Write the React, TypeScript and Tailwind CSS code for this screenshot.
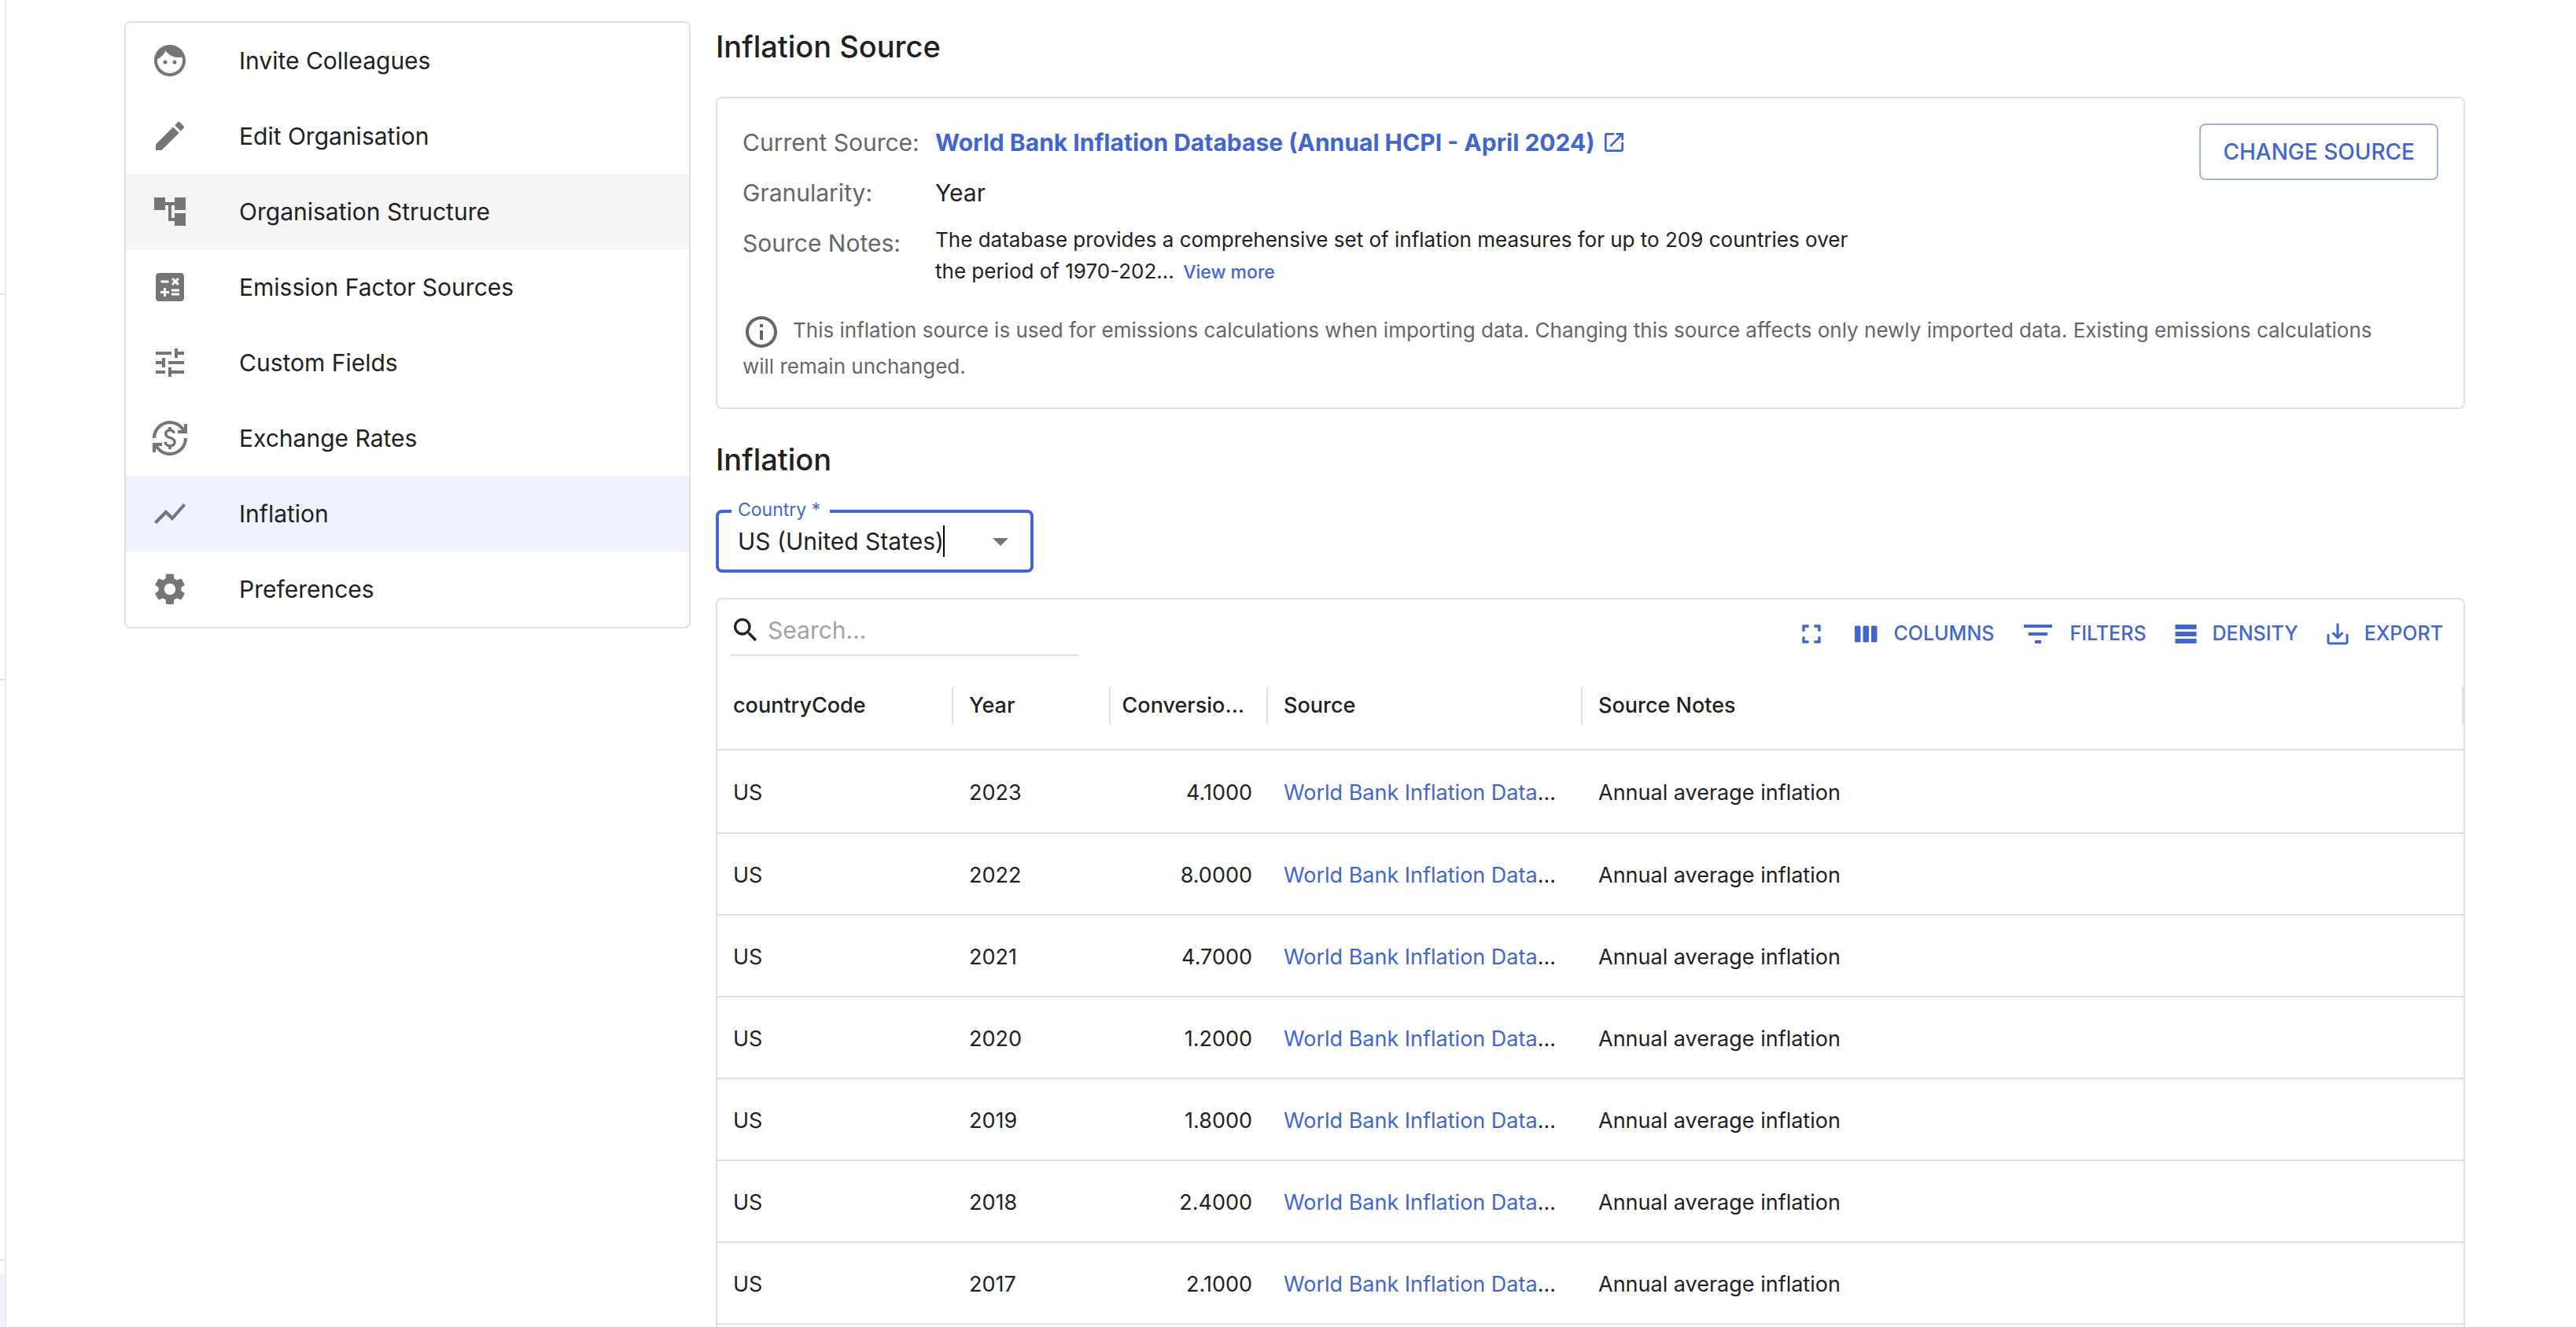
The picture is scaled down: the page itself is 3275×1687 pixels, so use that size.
import React, { useState } from 'react';
import {
  MdFace,
  MdEdit,
  MdAccountTree,
  MdCalculate,
  MdTune,
  MdCurrencyExchange,
  MdShowChart,
  MdSettings,
  MdOpenInNew,
  MdInfoOutline,
  MdArrowDropDown,
  MdSearch,
  MdFullscreen,
  MdFilterList,
  MdTableRows,
  MdSaveAlt,
} from 'react-icons/md';

const menuItems = [
  { id: 'invite', label: 'Invite Colleagues', icon: <MdFace /> },
  { id: 'edit', label: 'Edit Organisation', icon: <MdEdit /> },
  { id: 'structure', label: 'Organisation Structure', icon: <MdAccountTree /> },
  { id: 'factors', label: 'Emission Factor Sources', icon: <MdCalculate /> },
  { id: 'fields', label: 'Custom Fields', icon: <MdTune /> },
  { id: 'rates', label: 'Exchange Rates', icon: <MdCurrencyExchange /> },
  { id: 'inflation', label: 'Inflation', icon: <MdShowChart /> },
  { id: 'preferences', label: 'Preferences', icon: <MdSettings /> },
];

const rows = [
  { year: 2023, rate: '4.1000' },
  { year: 2022, rate: '8.0000' },
  { year: 2021, rate: '4.7000' },
  { year: 2020, rate: '1.2000' },
  { year: 2019, rate: '1.8000' },
  { year: 2018, rate: '2.4000' },
  { year: 2017, rate: '2.1000' },
];

const columns = [
  { label: 'countryCode', align: 'pl-5 text-left' },
  { label: 'Year', align: 'pl-5 text-left' },
  { label: 'Conversio…', align: 'pr-7 text-right' },
  { label: 'Source', align: 'pl-5 text-left' },
  { label: 'Source Notes', align: 'pl-5 text-left' },
];

const ColumnsIcon = () => (
  <svg viewBox="0 0 24 24" className="size-9" fill="currentColor" aria-hidden="true">
    <rect x="2" y="5" width="5" height="14" rx="1" />
    <rect x="9" y="5" width="5" height="14" rx="1" />
    <rect x="16" y="5" width="5" height="14" rx="1" />
  </svg>
);

const toolbar = [
  { label: 'COLUMNS', icon: <ColumnsIcon /> },
  { label: 'FILTERS', icon: <MdFilterList className="size-12" /> },
  { label: 'DENSITY', icon: <MdTableRows className="size-9" /> },
  { label: 'EXPORT', icon: <MdSaveAlt className="size-9" /> },
];

// Edge of the collapsed app drawer
const DrawerEdge = () => (
  <div className="flex w-2 shrink-0 flex-col border-r-2 border-[#e6e6ec]">
    <div className="h-[375px] border-b-2 border-[#e0e0e0]" />
    <div className="h-[490px] border-b-2 border-[#e0e0e0]" />
    <div className="h-[738px] border-b-2 border-[#e0e0e0]" />
    <div className="mt-4 flex-1 bg-[#eff1fd]" />
  </div>
);

const SideMenu = ({ active, onSelect }: { active: string; onSelect: (id: string) => void }) => (
  <nav className="w-[720px] shrink-0 self-start overflow-hidden rounded-lg border-2 border-[#e0e0e0]">
    {menuItems.map((item) => (
      <button
        key={item.id}
        onClick={() => onSelect(item.id)}
        className={`flex h-24 w-full items-center gap-16 px-8 text-left text-[30px] ${
          active === item.id ? 'bg-[#eff1fd]' : item.id === 'structure' ? 'bg-[#f5f5f5]' : 'hover:bg-[#f5f5f5]'
        }`}
      >
        <span className="text-5xl leading-none text-[#757575]">{item.icon}</span>
        <span>{item.label}</span>
      </button>
    ))}
  </nav>
);

const SourceCard = () => (
  <section className="mt-8 rounded-lg border-2 border-[#e0e0e0] p-8">
    <div className="flex items-start justify-between">
      <dl className="grid grid-cols-[229px_1fr] gap-4 text-[30px] leading-[48px]">
        <dt className="whitespace-nowrap text-[#666666]">Current Source:</dt>
        <dd>
          <a href="#source" className="flex items-center gap-2 font-bold text-[#4166cc]">
            World Bank Inflation Database (Annual HCPI - April 2024)
            <MdOpenInNew className="size-8" />
          </a>
        </dd>
        <dt className="text-[#666666]">Granularity:</dt>
        <dd>Year</dd>
        <dt className="whitespace-nowrap text-[#666666]">Source Notes:</dt>
        <dd className="max-w-[1184px] text-[26px] leading-10">
          The database provides a comprehensive set of inflation measures for up to 209 countries over the period of
          1970-202...{' '}
          <button className="ml-1 text-[23px] font-medium leading-8 text-[#4166cc]">View more</button>
        </dd>
      </dl>
      <button className="h-[72px] shrink-0 rounded-lg border-2 border-[#a0b3e0] px-7 text-[28px] font-medium text-[#4166cc]">
        CHANGE SOURCE
      </button>
    </div>
    <p className="mt-[33px] pr-10 text-[26px] leading-10 text-[#666666]">
      <MdInfoOutline className="mr-4 inline-block size-12 align-[-17px]" />
      This inflation source is used for emissions calculations when importing data. Changing this source affects only
      newly imported data. Existing emissions calculations will remain unchanged.
    </p>
  </section>
);

const CountryField = () => {
  const [country, setCountry] = useState('US (United States)');

  return (
    <div className="relative mt-8 flex h-20 w-[404px] items-center rounded-lg border-4 border-[#4166cc] pl-6 pr-3.5">
      <label htmlFor="country" className="absolute -top-5 left-4 bg-white pl-2 pr-3 text-[23px] leading-8 text-[#4166cc]">
        Country *
      </label>
      <input
        id="country"
        value={country}
        onChange={(e) => setCountry(e.target.value)}
        className="min-w-0 flex-1 text-[30px] outline-none"
      />
      <span className="absolute left-[285px] h-10 w-0.5 bg-black" aria-hidden="true" />
      <MdArrowDropDown className="size-12 shrink-0 text-[#757575]" />
    </div>
  );
};

const InflationTable = () => (
  <section className="mt-8 rounded-lg border-2 border-[#e0e0e0] pb-24">
    <div className="flex h-20 items-start justify-between pl-4 pr-[26px] pt-2">
      <div className="flex h-16 w-[444px] items-center gap-2 border-b-2 border-[#e0e0e0]">
        <MdSearch className="size-10 shrink-0" />
        <input
          type="search"
          aria-label="Search"
          placeholder="Search…"
          className="min-w-0 flex-1 text-[30px] outline-none placeholder:text-[#a3a3a3]"
        />
      </div>
      <div className="flex h-[72px] items-center gap-8 text-[25px] font-medium text-[#4166cc]">
        <button aria-label="Full screen">
          <MdFullscreen className="size-10" />
        </button>
        {toolbar.map((item) => (
          <button key={item.label} className="flex items-center gap-4">
            {item.icon}
            {item.label}
          </button>
        ))}
      </div>
    </div>

    <table className="w-full table-fixed border-separate border-spacing-0 text-[27px]">
      <colgroup>
        <col className="w-[300px]" />
        <col className="w-[200px]" />
        <col className="w-[200px]" />
        <col className="w-[400px]" />
        <col />
      </colgroup>
      <thead>
        <tr>
          {columns.map((col) => (
            <th key={col.label} className="h-28 border-b-2 border-[#e0e0e0] p-0 font-medium">
              <div className={`h-12 whitespace-nowrap border-r-2 border-[#e0e0e0] leading-[48px] ${col.align}`}>
                {col.label}
              </div>
            </th>
          ))}
        </tr>
      </thead>
      <tbody>
        {rows.map((row) => (
          <tr key={row.year} className="h-[104px] first:h-[106px] *:border-b-2 *:border-[#e0e0e0] *:pt-1">
            <td className="pl-5">US</td>
            <td className="pl-5">{row.year}</td>
            <td className="pr-5 text-right">{row.rate}</td>
            <td className="whitespace-nowrap pl-5">
              <a href="#source" className="text-[#4166cc]">
                World Bank Inflation Data
              </a>
              …
            </td>
            <td className="pl-5">Annual average inflation</td>
          </tr>
        ))}
      </tbody>
    </table>
  </section>
);

export default function App() {
  const [active, setActive] = useState('inflation');

  return (
    <div className="flex h-screen overflow-hidden bg-white font-['Inter',sans-serif] text-[#212121]">
      <DrawerEdge />
      <div className="flex flex-1 items-start gap-8 pl-[150px] pr-[141px] pt-[27px]">
        <SideMenu active={active} onSelect={setActive} />
        <main className="min-w-0 flex-1">
          <h2 className="text-[38px] font-medium leading-[64px]">Inflation Source</h2>
          <SourceCard />
          <h2 className="mt-8 text-[38px] font-medium leading-[64px]">Inflation</h2>
          <CountryField />
          <InflationTable />
        </main>
      </div>
    </div>
  );
}
